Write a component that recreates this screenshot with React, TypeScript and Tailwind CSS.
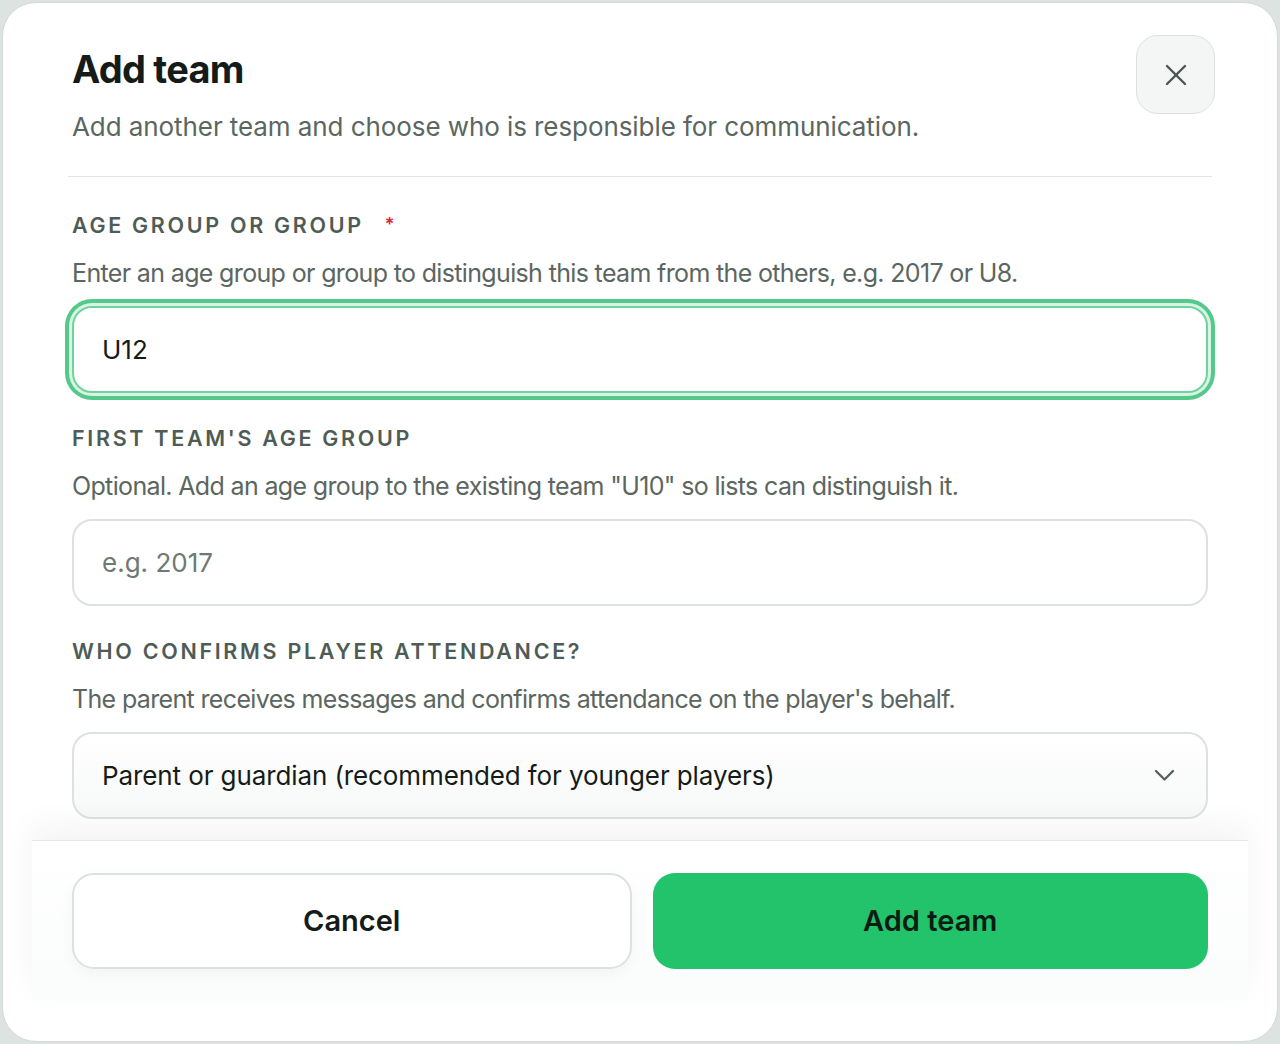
import { useState } from "react";

function CloseIcon() {
  return (
    <svg width="22" height="22" viewBox="0 0 22 22" fill="none" stroke="#4b5652" strokeWidth="2.4" strokeLinecap="round">
      <path d="M2 2 20 20" />
      <path d="M20 2 2 20" />
    </svg>
  );
}

function ChevronDown() {
  return (
    <svg width="21" height="13" viewBox="0 0 21 13" fill="none" stroke="#58625e" strokeWidth="2.4" strokeLinecap="round" strokeLinejoin="round">
      <path d="M2 2 10.5 10.5 19 2" />
    </svg>
  );
}

function Field({
  label,
  required,
  hint,
  first,
  children,
}: {
  label: string;
  required?: boolean;
  hint: string;
  first?: boolean;
  children: React.ReactNode;
}) {
  return (
    <div className={first ? "" : "mt-[31px]"}>
      <label className="flex items-center text-[21.5px] leading-[28px] font-semibold uppercase tracking-[0.125em] text-[#4f5c56]">
        {label}
        {required && <span className="ml-[21px] text-[18px] text-[#d5262f]">*</span>}
      </label>
      <p className="mt-[17px] text-[25px] leading-[34px] tracking-[-0.026em] text-[#5b6661]">{hint}</p>
      <div className="mt-[16px]">{children}</div>
    </div>
  );
}

export default function App() {
  const [group, setGroup] = useState("U12");
  const [firstGroup, setFirstGroup] = useState("");

  return (
    <div className="h-[1044px] w-full bg-[#dce3e0] p-[2px] font-['Inter',sans-serif]">
      <div className="flex h-full flex-col overflow-hidden rounded-[34px] border border-[#d3dad6] bg-white">
        {/* scrollable body */}
        <div className="flex-1 px-[65px]">
          <div className="flex items-start justify-between border-b border-[#e1e6e3] pt-[32px] pb-[31px]">
            <div className="mt-[12px] pl-[4px]">
              <h2 className="text-[38px] leading-[44px] font-bold tracking-[-0.02em] text-[#151b18]">Add team</h2>
              <p className="mt-[18px] text-[26px] leading-[36px] tracking-[-0.003em] text-[#5b6661]">
                Add another team and choose who is responsible for communication.
              </p>
            </div>
            <button className="mr-[-3px] flex h-[79px] w-[79px] items-center justify-center rounded-[22px] border border-[#dce1de] bg-[#f4f6f5]">
              <CloseIcon />
            </button>
          </div>

          <form className="px-[4px] pt-[34px]">
            <Field
              first
              required
              label="Age group or group"
              hint="Enter an age group or group to distinguish this team from the others, e.g. 2017 or U8."
            >
              <input
                value={group}
                onChange={(e) => setGroup(e.target.value)}
                className="h-[87px] w-full rounded-[20px] border-2 border-[#6fd49b] bg-white px-[28px] text-[26px] text-[#151b18] outline-none shadow-[0_0_0_3px_#d9f4e4,0_0_0_7px_#55c98a]"
              />
            </Field>

            <Field
              label="First team's age group"
              hint={'Optional. Add an age group to the existing team "U10" so lists can distinguish it.'}
            >
              <input
                value={firstGroup}
                onChange={(e) => setFirstGroup(e.target.value)}
                placeholder="e.g. 2017"
                className="h-[87px] w-full rounded-[20px] border-2 border-[#dde2df] bg-white px-[28px] text-[26px] text-[#151b18] outline-none placeholder:text-[#6f7974]"
              />
            </Field>

            <Field
              label="Who confirms player attendance?"
              hint="The parent receives messages and confirms attendance on the player's behalf."
            >
              <button
                type="button"
                className="flex h-[87px] w-full items-center justify-between rounded-[20px] border-2 border-[#dde2df] bg-gradient-to-b from-white to-[#f7f8f8] pl-[28px] pr-[31px] text-[26px] tracking-[-0.004em] text-[#151b18]"
              >
                <span>Parent or guardian (recommended for younger players)</span>
                <ChevronDown />
              </button>
            </Field>
          </form>
        </div>

        {/* sticky footer */}
        <div className="mx-[29px] mb-[41px] flex h-[160px] gap-[21px] border-t border-[#e3e7e5] bg-gradient-to-b from-white to-[#fbfcfc] px-[40px] pt-[32px] pb-[31px] shadow-[0_-14px_30px_rgba(20,30,25,0.05)]">
          <button className="flex-1 rounded-[22px] border-2 border-[#dde2df] bg-white text-[29px] font-semibold text-[#151b18] shadow-[0_6px_16px_rgba(20,30,25,0.04)]">
            Cancel
          </button>
          <button className="flex-1 rounded-[22px] bg-[#22c36b] text-[29px] font-semibold text-[#0b1c12]">
            Add team
          </button>
        </div>
      </div>
    </div>
  );
}
